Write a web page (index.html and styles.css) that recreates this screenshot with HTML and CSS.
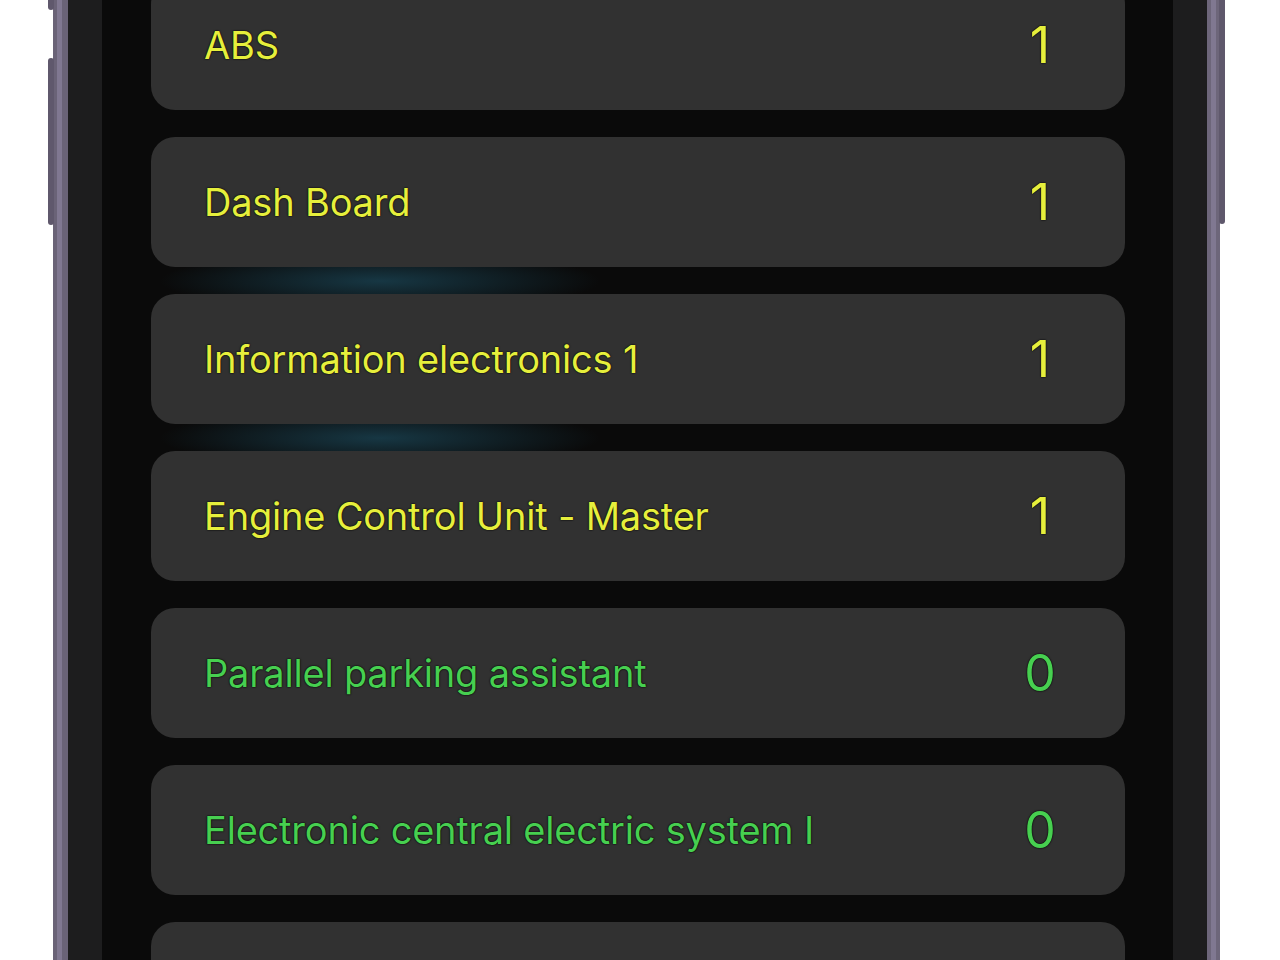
FILE: index.html
```html
<!DOCTYPE html>
<html lang="en">
<head>
<meta charset="utf-8">
<title>Fault codes</title>
<link rel="stylesheet" href="styles.css">
</head>
<body>
<div class="stage">
  <div class="phone">
    <span class="btn btn-l1"></span>
    <span class="btn btn-l2"></span>
    <span class="btn btn-r1"></span>
    <div class="bezel">
      <div class="screen">
        <ul class="list">
          <li class="card warn"><span class="name">ABS</span><span class="count">1</span></li>
          <li class="card warn"><span class="name">Dash Board</span><span class="count">1</span></li>
          <li class="card warn"><span class="name">Information electronics 1</span><span class="count">1</span></li>
          <li class="card warn"><span class="name">Engine Control Unit - Master</span><span class="count">1</span></li>
          <li class="card ok"><span class="name">Parallel parking assistant</span><span class="count">0</span></li>
          <li class="card ok"><span class="name">Electronic central electric system I</span><span class="count">0</span></li>
          <li class="card ok"><span class="name"></span><span class="count"></span></li>
        </ul>
      </div>
    </div>
  </div>
</div>
</body>
</html>
```
FILE: styles.css
```css
html, body {
  margin: 0;
  padding: 0;
  background: #ffffff;
  height: 960px;
  overflow: hidden;
}

.stage {
  padding-left: 53px;
  width: 1167px;
}

.phone {
  position: relative;
  width: 1167px;
  height: 1100px;
  box-sizing: border-box;
  border-left: 15px solid #6a6377;
  border-right: 13px solid #6d667a;
  background: #1c1c1d;
}

.phone::before,
.phone::after {
  content: "";
  position: absolute;
  top: 0;
  bottom: 0;
  width: 5px;
  background: #807891;
}
.phone::before { left: -11px; }
.phone::after { right: -9px; }

.btn {
  position: absolute;
  width: 6px;
  background: #5f586c;
  border-radius: 3px;
}
.btn-l1 { left: -20px; top: -20px; height: 30px; }
.btn-l2 { left: -20px; top: 58px; height: 167px; }
.btn-r1 { right: -18px; top: -20px; height: 244px; }

.bezel {
  height: 100%;
  padding: 0 34px;
  background: #1d1d1e;
}

.screen {
  height: 100%;
  background: #0a0a0a;
  padding: 0;
  overflow: hidden;
}

.list {
  list-style: none;
  margin: -20px 0 0 0;
  padding: 0 48px 0 49px;
  display: flex;
  flex-direction: column;
  gap: 27px;
  background:
    radial-gradient(ellipse 220px 30px at 278px 301px, rgba(28, 74, 92, 0.7), rgba(28, 74, 92, 0) 100%),
    radial-gradient(ellipse 220px 30px at 278px 458px, rgba(28, 74, 92, 0.7), rgba(28, 74, 92, 0) 100%);
}

.card {
  height: 130px;
  box-sizing: border-box;
  background: #313131;
  border-radius: 24px;
  display: flex;
  align-items: center;
  justify-content: space-between;
  padding: 0 55px 0 53px;
  font-family: Inter, "Noto Sans", sans-serif;
}

.name {
  font-size: 38px;
  letter-spacing: -0.2px;
  text-shadow: 0 0 2px #000, 0 0 1px #000;
}

.count {
  width: 60px;
  text-align: center;
  font-size: 50px;
  text-shadow: 0 0 2px #000, 0 0 1px #000;
}

.warn { color: #e6ef3c; }
.ok { color: #47cf50; }
```
